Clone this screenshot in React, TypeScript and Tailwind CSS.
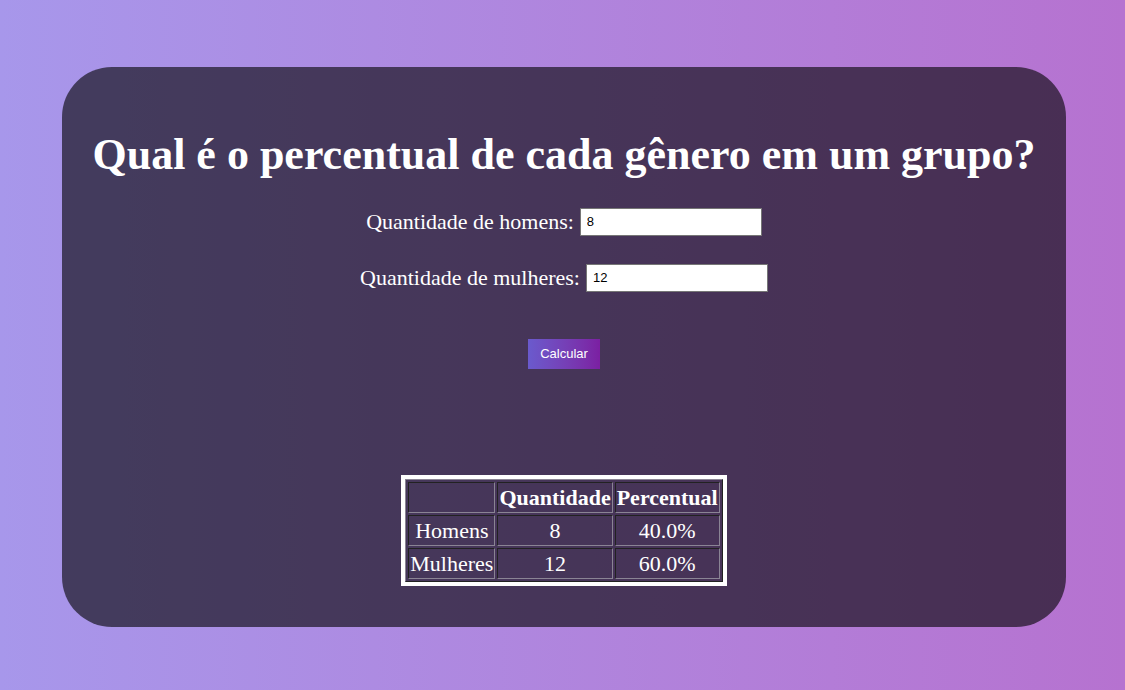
import React, { useState } from "react";

export default function App() {
  const [homens, setHomens] = useState("8");
  const [mulheres, setMulheres] = useState("12");

  const h = Number(homens) || 0;
  const m = Number(mulheres) || 0;
  const total = h + m;
  const pct = (n: number) => (total ? ((n / total) * 100).toFixed(1) : "0.0") + "%";

  const cell =
    "border border-t-[#222] border-l-[#222] border-b-[#8a8494] border-r-[#8a8494] px-[1px] leading-[29px] text-center";

  return (
    <div className="min-h-[690px] w-full bg-gradient-to-r from-[#a797eb] to-[#b672d0] pt-[67px] pb-[63px] pl-[62px] pr-[59px] font-['Liberation_Serif',serif] text-white">
      <div className="h-[560px] rounded-[50px] bg-black/60 flex flex-col items-center">
        <h1 className="mt-[63px] text-[44px] font-bold leading-[50px]">
          Qual é o percentual de cada gênero em um grupo?
        </h1>

        <div className="mt-[28px] flex items-center gap-[6px] text-[22px] leading-[28px]">
          <label>Quantidade de homens:</label>
          <input
            value={homens}
            onChange={(e) => setHomens(e.target.value)}
            className="w-[182px] h-[28px] bg-white border border-[#767676] px-[6px] text-[13px] text-black font-['Liberation_Sans',sans-serif] outline-none"
          />
        </div>

        <div className="mt-[28px] flex items-center gap-[6px] text-[22px] leading-[28px]">
          <label>Quantidade de mulheres:</label>
          <input
            value={mulheres}
            onChange={(e) => setMulheres(e.target.value)}
            className="w-[182px] h-[28px] bg-white border border-[#767676] px-[6px] text-[13px] text-black font-['Liberation_Sans',sans-serif] outline-none"
          />
        </div>

        <button className="mt-[47px] h-[30px] w-[72px] bg-gradient-to-r from-[#6a5acd] to-[#7b1fa2] text-[13px] text-white font-['Liberation_Sans',sans-serif]">
          Calcular
        </button>

        <div className="mt-[106px] border-4 border-white">
          <table className="border border-t-[#8a8494] border-l-[#8a8494] border-b-[#222] border-r-[#222] border-separate border-spacing-[2px] text-[22px]">
            <thead>
              <tr>
                <th className={cell}></th>
                <th className={cell + " font-bold"}>Quantidade</th>
                <th className={cell + " font-bold"}>Percentual</th>
              </tr>
            </thead>
            <tbody>
              <tr>
                <td className={cell}>Homens</td>
                <td className={cell}>{h}</td>
                <td className={cell}>{pct(h)}</td>
              </tr>
              <tr>
                <td className={cell}>Mulheres</td>
                <td className={cell}>{m}</td>
                <td className={cell}>{pct(m)}</td>
              </tr>
            </tbody>
          </table>
        </div>
      </div>
    </div>
  );
}
